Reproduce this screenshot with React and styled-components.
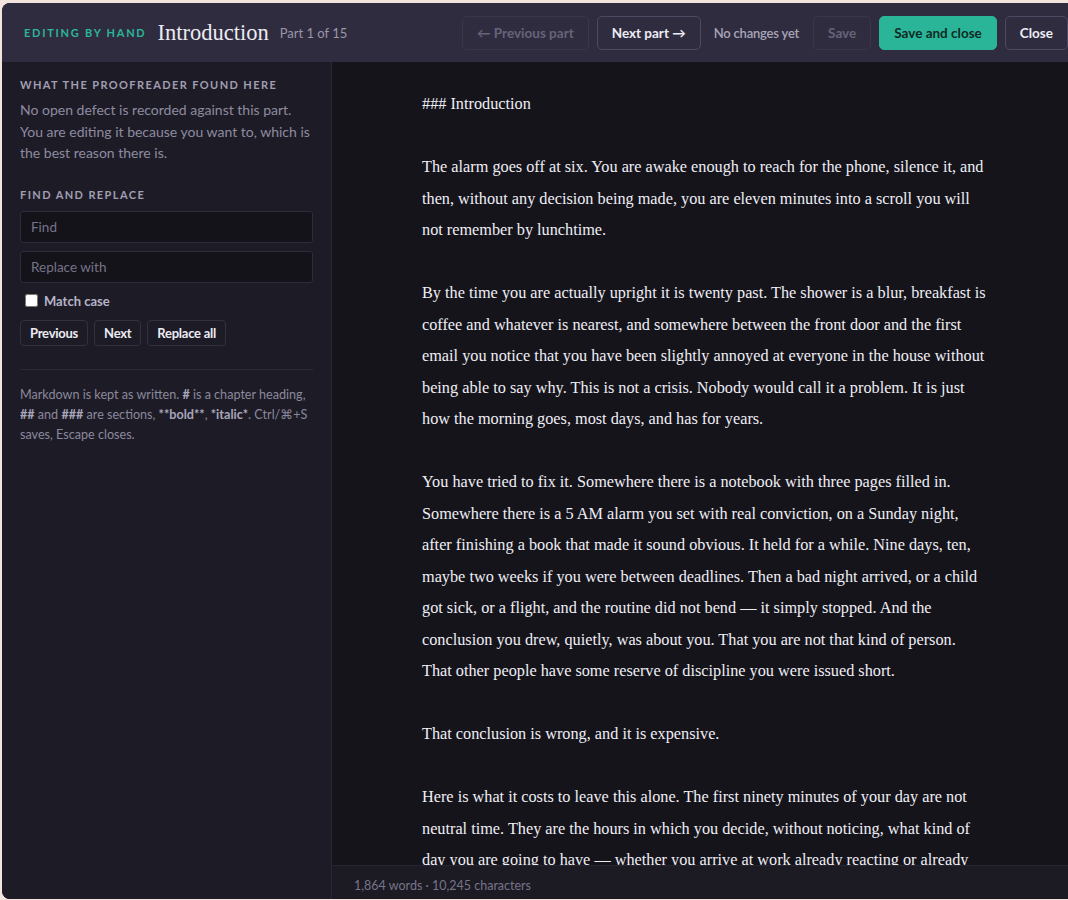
import styled, { createGlobalStyle } from 'styled-components'

const Global = createGlobalStyle`
  html, body {
    margin: 0;
    height: 100%;
    overflow: hidden;
    background: #f3e5dd;
  }
  * { box-sizing: border-box; }
`

const Backdrop = styled.div`
  height: 100vh;
  padding: 3px 0 0 2px;
`

const Dialog = styled.div`
  width: 1074px;
  height: 896px;
  border-radius: 8px;
  overflow: hidden;
  display: flex;
  flex-direction: column;
  background: #15141b;
  font-family: Lato, "Noto Sans", sans-serif;
`

const Header = styled.header`
  height: 59px;
  flex-shrink: 0;
  display: flex;
  align-items: center;
  padding: 0 8px 0 22px;
  background: #302c40;
`

const Kicker = styled.span`
  font-size: 11px;
  font-weight: 700;
  letter-spacing: 1.75px;
  color: #2bb598;
  text-transform: uppercase;
`

const Title = styled.h1`
  margin: 0 0 0 11px;
  font-family: "Liberation Serif", "DejaVu Serif", serif;
  font-weight: 400;
  font-size: 22.5px;
  color: #ecebf3;
`

const PartNo = styled.span`
  margin-left: 11px;
  font-size: 13px;
  color: #9a97a9;
`

const Actions = styled.div`
  margin-left: auto;
  display: flex;
  align-items: center;
  gap: 8px;
`

const HeadButton = styled.button`
  height: 34px;
  padding: 0 14px;
  border-radius: 5px;
  font-family: inherit;
  font-size: 13.5px;
  font-weight: 700;
  cursor: pointer;
  border: 1px solid ${p => (p.$primary ? '#2bb598' : p.disabled ? '#3a374a' : '#4d4963')};
  background: ${p => (p.$primary ? '#2bb598' : 'transparent')};
  color: ${p => (p.$primary ? '#0e2a24' : p.disabled ? '#666379' : '#eeedf4')};
  &:disabled { cursor: default; }
`

const Status = styled.span`
  margin: 0 6px 0 5px;
  font-size: 13px;
  font-weight: 600;
  letter-spacing: -0.2px;
  color: #a8a5b7;
`

const Body = styled.div`
  flex: 1;
  min-height: 0;
  display: flex;
`

const Sidebar = styled.aside`
  width: 330px;
  flex-shrink: 0;
  padding: 16px 18px;
  background: #1d1c26;
  border-right: 1px solid #2a2835;
`

const SectionLabel = styled.h2`
  margin: 0 0 7px;
  font-size: 11px;
  font-weight: 700;
  letter-spacing: 1.4px;
  color: #a19eb2;
  text-transform: uppercase;
  line-height: 14px;
`

const Note = styled.p`
  margin: 0 0 24px;
  font-size: 14px;
  line-height: 21.5px;
  color: #8e8ba0;
`

const Field = styled.input`
  display: block;
  width: 100%;
  height: 32px;
  margin-top: ${p => p.$gap || 0}px;
  padding: 0 10px;
  background: #141319;
  border: 1px solid #2e2c3a;
  border-radius: 3px;
  font-family: inherit;
  font-size: 13.5px;
  color: #e5e3ee;
  &::placeholder { color: #767389; }
`

const CheckRow = styled.label`
  display: flex;
  align-items: center;
  gap: 6px;
  margin: 10px 0 11px;
  font-size: 13px;
  font-weight: 700;
  color: #b6b4c9;
`

const Check = styled.input`
  width: 13px;
  height: 13px;
  margin: 0 0 0 5px;
`

const ToolRow = styled.div`
  display: flex;
  gap: 6px;
`

const ToolButton = styled.button`
  height: 26px;
  padding: 0 9px;
  border: 1px solid #33313e;
  border-radius: 4px;
  background: #1d1c26;
  font-family: inherit;
  font-size: 13px;
  font-weight: 700;
  letter-spacing: -0.25px;
  color: #ecebf3;
  cursor: pointer;
`

const Rule = styled.hr`
  margin: 23px 0 15px;
  border: none;
  border-top: 1px solid #2c2a37;
`

const Hint = styled.p`
  margin: 0;
  font-size: 12.6px;
  line-height: 20px;
  color: #8b889c;
  b { color: #a9a6bb; }
`

const Main = styled.main`
  flex: 1;
  min-width: 0;
  display: flex;
  flex-direction: column;
`

const Editor = styled.textarea`
  flex: 1;
  min-height: 0;
  width: 100%;
  padding: 27px 0 0 90px;
  border: none;
  outline: none;
  resize: none;
  overflow: hidden;
  white-space: pre;
  background: #15141b;
  font-family: "Liberation Serif", "DejaVu Serif", serif;
  font-size: 16.25px;
  line-height: 31.5px;
  color: #efeef5;
`

const Footer = styled.footer`
  height: 34px;
  flex-shrink: 0;
  padding: 12px 22px 0;
  background: #1c1b24;
  border-top: 1px solid #272532;
  font-size: 12.5px;
  line-height: 15px;
  color: #777489;
`

const text = `### Introduction

The alarm goes off at six. You are awake enough to reach for the phone, silence it, and
then, without any decision being made, you are eleven minutes into a scroll you will
not remember by lunchtime.

By the time you are actually upright it is twenty past. The shower is a blur, breakfast is
coffee and whatever is nearest, and somewhere between the front door and the first
email you notice that you have been slightly annoyed at everyone in the house without
being able to say why. This is not a crisis. Nobody would call it a problem. It is just
how the morning goes, most days, and has for years.

You have tried to fix it. Somewhere there is a notebook with three pages filled in.
Somewhere there is a 5 AM alarm you set with real conviction, on a Sunday night,
after finishing a book that made it sound obvious. It held for a while. Nine days, ten,
maybe two weeks if you were between deadlines. Then a bad night arrived, or a child
got sick, or a flight, and the routine did not bend — it simply stopped. And the
conclusion you drew, quietly, was about you. That you are not that kind of person.
That other people have some reserve of discipline you were issued short.

That conclusion is wrong, and it is expensive.

Here is what it costs to leave this alone. The first ninety minutes of your day are not
neutral time. They are the hours in which you decide, without noticing, what kind of
day you are going to have — whether you arrive at work already reacting or already
choosing, whether the people you live with get the best of you or what is left over.`

const App = () => {
  return (
    <>
      <Global />
      <Backdrop>
        <Dialog>
          <Header>
            <Kicker>Editing by hand</Kicker>
            <Title>Introduction</Title>
            <PartNo>Part 1 of 15</PartNo>
            <Actions>
              <HeadButton disabled>← Previous part</HeadButton>
              <HeadButton>Next part →</HeadButton>
              <Status>No changes yet</Status>
              <HeadButton disabled>Save</HeadButton>
              <HeadButton $primary>Save and close</HeadButton>
              <HeadButton>Close</HeadButton>
            </Actions>
          </Header>
          <Body>
            <Sidebar>
              <SectionLabel>What the proofreader found here</SectionLabel>
              <Note>
                No open defect is recorded against this part.<br />
                You are editing it because you want to, which is<br />
                the best reason there is.
              </Note>
              <SectionLabel>Find and replace</SectionLabel>
              <Field $gap={9} placeholder="Find" />
              <Field $gap={8} placeholder="Replace with" />
              <CheckRow>
                <Check type="checkbox" />
                Match case
              </CheckRow>
              <ToolRow>
                <ToolButton>Previous</ToolButton>
                <ToolButton>Next</ToolButton>
                <ToolButton>Replace all</ToolButton>
              </ToolRow>
              <Rule />
              <Hint>
                Markdown is kept as written. <b>#</b> is a chapter heading,<br />
                <b>##</b> and <b>###</b> are sections, <b>**bold**</b>, <b>*italic*</b>. Ctrl/⌘+S<br />
                saves, Escape closes.
              </Hint>
            </Sidebar>
            <Main>
              <Editor defaultValue={text} spellCheck={false} wrap="off" />
              <Footer>1,864 words · 10,245 characters</Footer>
            </Main>
          </Body>
        </Dialog>
      </Backdrop>
    </>
  )
}

export default App
